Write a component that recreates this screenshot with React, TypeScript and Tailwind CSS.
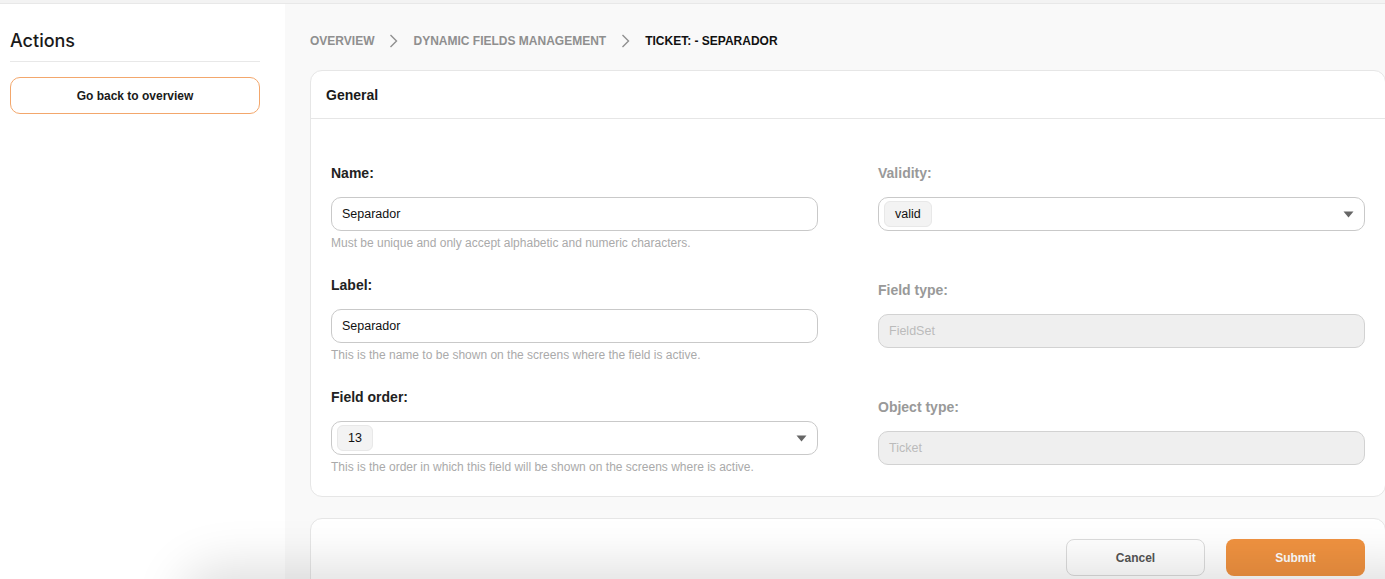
import React from "react";

const font = { fontFamily: '"Liberation Sans", Arial, Helvetica, sans-serif' };

function Caret() {
  return (
    <svg width="11" height="7" viewBox="0 0 11 7" className="shrink-0">
      <path d="M0.5 0.5 L10.5 0.5 L5.5 6.5 Z" fill="#666" />
    </svg>
  );
}

function Chevron() {
  return (
    <svg width="9" height="14" viewBox="0 0 9 14" className="shrink-0">
      <path d="M1.5 1 L7.5 7 L1.5 13" fill="none" stroke="#8f8f8f" strokeWidth="1.4" />
    </svg>
  );
}

function TextField({ label, value, help }: { label: string; value: string; help: string }) {
  return (
    <div className="flex flex-col">
      <div className="h-[20px] leading-[20px] text-[14px] font-bold text-[#222]">{label}</div>
      <div className="mt-[14px] h-[34px] rounded-[10px] border border-[#c9c9c9] bg-white flex items-center px-[10px] text-[12.5px] text-[#111]">
        {value}
      </div>
      <div className="mt-[4px] h-[16px] leading-[16px] text-[12px] text-[#aaaaaa]">{help}</div>
    </div>
  );
}

function SelectField({ label, value, help, muted }: { label: string; value: string; help?: string; muted?: boolean }) {
  return (
    <div className="flex flex-col">
      <div className={`h-[20px] leading-[20px] text-[14px] font-bold ${muted ? "text-[#999]" : "text-[#222]"}`}>{label}</div>
      <div className="mt-[14px] h-[34px] rounded-[10px] border border-[#c9c9c9] bg-white flex items-center pl-[5px] pr-[10px]">
        <div className="h-[26px] px-[10px] flex items-center rounded-[6px] bg-[#f3f3f3] border border-[#e8e8e8] text-[12.5px] text-[#111]">
          {value}
        </div>
        <div className="flex-1" />
        <Caret />
      </div>
      {help && <div className="mt-[4px] h-[16px] leading-[16px] text-[12px] text-[#aaaaaa]">{help}</div>}
    </div>
  );
}

function DisabledField({ label, value }: { label: string; value: string }) {
  return (
    <div className="flex flex-col">
      <div className="h-[20px] leading-[20px] text-[14px] font-bold text-[#999]">{label}</div>
      <div className="mt-[14px] h-[34px] rounded-[10px] border border-[#d2d2d2] bg-[#efefef] flex items-center px-[10px] text-[12.5px] text-[#bbbbbb]">
        {value}
      </div>
    </div>
  );
}

export default function App() {
  return (
    <div style={font} className="relative w-[1385px] h-[579px] overflow-hidden bg-white flex flex-col">
      <div className="h-[4px] shrink-0 bg-[#f3f3f3] border-b border-[#e8e8e8]" />
      <div className="flex flex-1 min-h-0">
        {/* Sidebar */}
        <aside className="w-[285px] shrink-0 bg-white px-[10px] pr-[25px]">
          <div className="h-[56px] flex items-end pb-[7px]">
            <div
              className="text-[18px] leading-[24px] font-medium text-[#1a1a1a]"
              style={{ fontFamily: 'Inter, "Liberation Sans", Arial, sans-serif' }}
            >
              Actions
            </div>
          </div>
          <div className="mt-[1px] h-px bg-[#e8e8e8]" />
          <button className="mt-[15px] w-full h-[37px] rounded-[10px] border border-[#f3a76c] bg-white text-[12px] font-bold text-[#1a1a1a]">
            Go back to overview
          </button>
        </aside>

        {/* Main */}
        <main className="flex-1 min-w-0 bg-[#f9f9f9] pl-[25px] overflow-hidden">
          <div className="h-[66px] flex items-center gap-[15px] text-[12px] font-bold uppercase pt-[7px]">
            <span className="text-[#8f8f8f]">Overview</span>
            <Chevron />
            <span className="text-[#8f8f8f]">Dynamic Fields Management</span>
            <Chevron />
            <span className="text-[#111]">Ticket: - Separador</span>
          </div>

          <section className="w-[1076px] rounded-[12px] border border-[#e6e6e6] bg-white">
            <div className="h-[48px] flex items-center px-[15px] pt-[2px] border-b border-[#e6e6e6]">
              <span className="text-[14px] font-bold text-[#1a1a1a]">General</span>
            </div>
            <div className="flex gap-[60px] px-[20px] pt-[44px] pb-[21px]">
              <div className="w-[487px] flex flex-col gap-[24px]">
                <TextField label="Name:" value="Separador" help="Must be unique and only accept alphabetic and numeric characters." />
                <TextField label="Label:" value="Separador" help="This is the name to be shown on the screens where the field is active." />
                <SelectField label="Field order:" value="13" help="This is the order in which this field will be shown on the screens where is active." />
              </div>
              <div className="w-[487px] flex flex-col gap-[49px]">
                <SelectField label="Validity:" value="valid" muted />
                <DisabledField label="Field type:" value="FieldSet" />
                <DisabledField label="Object type:" value="Ticket" />
              </div>
            </div>
          </section>

          <section className="mt-[21px] w-[1076px] h-[120px] rounded-[12px] border border-[#e6e6e6] bg-white">
            <div className="flex justify-end gap-[21px] pr-[20px] pt-[20px]">
              <button className="w-[139px] h-[37px] rounded-[8px] border border-[#dcdcdc] bg-white text-[12px] font-bold text-[#555]">
                Cancel
              </button>
              <button className="w-[139px] h-[37px] rounded-[8px] bg-[#f09240] text-[12px] font-bold text-white">
                Submit
              </button>
            </div>
          </section>
        </main>
      </div>
      {/* shadow from element just below the viewport */}
      <div className="absolute left-[200px] right-[-40px] top-[586px] h-[40px] rounded-full bg-white shadow-[0_0_50px_20px_rgba(0,0,0,0.13)]" />
    </div>
  );
}
